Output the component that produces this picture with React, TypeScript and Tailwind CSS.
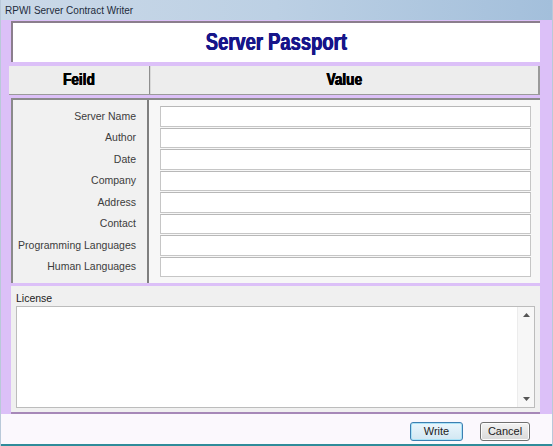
import React from "react";

const FIELDS = [
  "Server Name",
  "Author",
  "Date",
  "Company",
  "Address",
  "Contact",
  "Programming Languages",
  "Human Languages",
];

function Triangle({ up }: { up?: boolean }) {
  return (
    <svg width="7" height="4" viewBox="0 0 7 4" className="block">
      {up ? (
        <path d="M0 4 L3.5 0 L7 4 Z" fill="#555" />
      ) : (
        <path d="M0 0 L3.5 4 L7 0 Z" fill="#555" />
      )}
    </svg>
  );
}

export default function App() {
  return (
    <div className="flex h-[446px] w-[553px] flex-col overflow-hidden border-l border-r border-[#b9c9d9] bg-[#fbf8fd] font-['Liberation_Sans',sans-serif] text-[#333]">
      {/* Title bar */}
      <div className="flex h-[20px] shrink-0 items-center bg-gradient-to-r from-[#cbd9e8] via-[#bcd0e4] to-[#a3bfdb] px-[4px] text-[10px] text-[#1e2c3c]">
        RPWI Server Contract Writer
      </div>

      {/* Window body */}
      <div className="flex h-[394px] shrink-0 flex-col bg-[#dcc0f8] pl-[8px] pr-[12px]">
        {/* Heading */}
        <div className="ml-[2px] mt-[1px] flex h-[41px] items-center justify-center border-l-2 border-t-2 border-[#8b7e8d] bg-white">
          <span className="origin-center scale-x-[0.8] text-[23px] font-bold text-[#17158a] [text-shadow:0.6px_0_0_#17158a,-0.3px_0_0_#17158a]">
            Server Passport
          </span>
        </div>

        {/* Column headers */}
        <div className="mt-[4px] flex h-[29px] border-b border-r-2 border-[#9a9a9a] bg-[#ededed]">
          <div className="flex w-[141px] items-center justify-center border-r border-[#8e8e8e]">
            <span className="scale-x-[0.8] text-[17px] font-bold text-black [text-shadow:0.6px_0_0_#000,-0.3px_0_0_#000]">
              Feild
            </span>
          </div>
          <div className="flex flex-1 items-center justify-center border-l border-[#d8d8d8]">
            <span className="scale-x-[0.8] text-[17px] font-bold text-black [text-shadow:0.6px_0_0_#000,-0.3px_0_0_#000]">
              Value
            </span>
          </div>
        </div>

        {/* Field grid */}
        <div className="ml-[2px] mt-[3px] flex h-[185px] border-l-2 border-t-2 border-[#8a8a8a] bg-[#f1f1f1]">
          <div className="flex w-[136px] flex-col border-r-2 border-[#7f7f7f] pt-[6px]">
            {FIELDS.map((f) => (
              <div
                key={f}
                className="flex h-[21.5px] items-center justify-end pr-[11px] text-[10.5px] text-[#3c3c3c]"
              >
                {f}
              </div>
            ))}
          </div>
          <div className="flex flex-1 flex-col gap-[1px] bg-[#f7f7f7] pl-[11px] pr-[9px] pt-[6px]">
            {FIELDS.map((f) => (
              <div
                key={f}
                className="h-[20.5px] border border-[#c6c6c6] border-t-[#b8b8b8] bg-white"
              />
            ))}
          </div>
        </div>

        {/* License */}
        <div className="ml-[2px] mt-[3px] flex flex-1 flex-col border-b-2 border-[#a688b8] bg-[#f0f0f0] pb-[4px] pl-[5px] pr-[5px] pt-[6px]">
          <div className="h-[14px] text-[10.5px] leading-[12px] text-[#222]">License</div>
          <div className="flex flex-1 border border-[#bcbcbc] bg-white">
            <div className="flex-1" />
            <div className="flex w-[17px] flex-col items-center justify-between border-l border-[#ececec] bg-[#f7f7f7] py-[6px]">
              <Triangle up />
              <Triangle />
            </div>
          </div>
        </div>
      </div>

      {/* Buttons */}
      <div className="flex flex-1 items-end justify-end gap-[17px] border-b-2 border-[#2f8c9a] pb-[3px] pr-[22px]">
        <button className="h-[19px] w-[53px] rounded-[3px] border border-[#3c7fb1] bg-gradient-to-b from-[#eaf6fd] to-[#d2e7f2] text-[11px] text-[#222] shadow-[inset_0_0_0_1px_#a9e2f7]">
          Write
        </button>
        <button className="h-[19px] w-[50px] rounded-[3px] border border-[#707070] bg-gradient-to-b from-[#f3f3f3] to-[#d9d9d9] text-[11px] text-[#222] shadow-[inset_0_0_0_1px_#fcfcfc]">
          Cancel
        </button>
      </div>
    </div>
  );
}
